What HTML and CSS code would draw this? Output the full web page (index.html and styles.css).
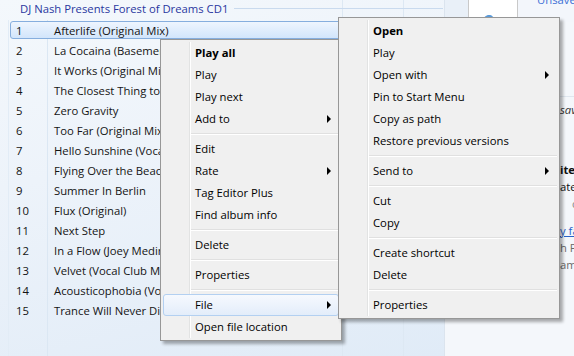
FILE: index.html
```html
<!DOCTYPE html>
<html>
<head>
<meta charset="utf-8">
<title>Media Player</title>
<link rel="stylesheet" href="styles.css">
</head>
<body>
<div class="app">
  <section class="list">
    <div class="album">
      <span class="album-title">DJ Nash Presents Forest of Dreams CD1</span>
      <span class="album-rule"></span>
    </div>
    <div class="row selected"><span class="num">1</span><span class="title">Afterlife (Original Mix)</span></div>
    <div class="row"><span class="num">2</span><span class="title">La Cocaina (Basement Mix)</span></div>
    <div class="row"><span class="num">3</span><span class="title">It Works (Original Mix)</span></div>
    <div class="row"><span class="num">4</span><span class="title">The Closest Thing to Heaven</span></div>
    <div class="row"><span class="num">5</span><span class="title">Zero Gravity</span></div>
    <div class="row"><span class="num">6</span><span class="title">Too Far (Original Mix)</span></div>
    <div class="row"><span class="num">7</span><span class="title">Hello Sunshine (Vocal Mix)</span></div>
    <div class="row"><span class="num">8</span><span class="title">Flying Over the Beach</span></div>
    <div class="row"><span class="num">9</span><span class="title">Summer In Berlin</span></div>
    <div class="row"><span class="num">10</span><span class="title">Flux (Original)</span></div>
    <div class="row"><span class="num">11</span><span class="title">Next Step</span></div>
    <div class="row"><span class="num">12</span><span class="title">In a Flow (Joey Medina Remix)</span></div>
    <div class="row"><span class="num">13</span><span class="title">Velvet (Vocal Club Mix)</span></div>
    <div class="row"><span class="num">14</span><span class="title">Acousticophobia (Vocal Mix)</span></div>
    <div class="row"><span class="num">15</span><span class="title">Trance Will Never Die</span></div>
  </section>
  <aside class="panel">
    <div class="panel-top">
      <div class="thumb">
        <svg class="thumb-icon" width="14" height="8" viewBox="0 0 14 8"><path d="M2 8 C2 3 5 1 8 1 C11 1 13 3 13 6 L13 8 Z" fill="#5b9ad8"/></svg>
      </div>
      <span class="unsaved">Unsaved list</span>
    </div>
    <div class="info">
      <div class="info-line info-italic">save</div>
      <div class="info-rule"></div>
      <div class="info-line info-bold">items</div>
      <div class="info-line">ate</div>
      <div class="info-line info-grey info-c">c</div>
      <div class="info-line info-link">y fa</div>
      <div class="info-line info-grey">h P</div>
      <div class="info-line info-grey">am</div>
    </div>
  </aside>
</div>

<div class="menu menu-track">
  <div class="item bold">Play all</div>
  <div class="item">Play</div>
  <div class="item">Play next</div>
  <div class="item sub">Add to</div>
  <div class="sep"></div>
  <div class="item">Edit</div>
  <div class="item sub">Rate</div>
  <div class="item">Tag Editor Plus</div>
  <div class="item">Find album info</div>
  <div class="sep"></div>
  <div class="item">Delete</div>
  <div class="sep"></div>
  <div class="item">Properties</div>
  <div class="sep"></div>
  <div class="item sub hot">File</div>
  <div class="item">Open file location</div>
</div>

<div class="menu menu-file">
  <div class="item bold">Open</div>
  <div class="item">Play</div>
  <div class="item sub">Open with</div>
  <div class="item">Pin to Start Menu</div>
  <div class="item">Copy as path</div>
  <div class="item">Restore previous versions</div>
  <div class="sep"></div>
  <div class="item sub">Send to</div>
  <div class="sep"></div>
  <div class="item">Cut</div>
  <div class="item">Copy</div>
  <div class="sep"></div>
  <div class="item">Create shortcut</div>
  <div class="item">Delete</div>
  <div class="sep"></div>
  <div class="item">Properties</div>
</div>
</body>
</html>
```

FILE: styles.css
```css
* { box-sizing: border-box; }

html, body {
  margin: 0;
  width: 574px;
  height: 356px;
  overflow: hidden;
}

body {
  position: relative;
  font-family: "Open Sans", "Noto Sans", sans-serif;
  font-size: 11.3px;
  color: #101010;
  background: #f4f7fb;
}

.app {
  display: grid;
  grid-template-columns: 445px 129px;
  height: 356px;
}

/* ---------- playlist ---------- */
.list {
  height: 356px;
  overflow: hidden;
  display: flex;
  flex-direction: column;
  border-right: 1px solid #dbe4ee;
  background:
    linear-gradient(#e2ecf6, #e2ecf6) 8px 20px / 1px 100% no-repeat,
    linear-gradient(#dbe7f3, #dbe7f3) 47px 20px / 1px 100% no-repeat,
    linear-gradient(#dde8f3, #dde8f3) 342px 0 / 1px 100% no-repeat,
    linear-gradient(#dde8f3, #dde8f3) 403px 0 / 1px 100% no-repeat,
    linear-gradient(165deg, #f4f8fc 0%, #edf3fa 40%, #e0ebf7 100%);
}

.album {
  height: 20px;
  flex: none;
  display: flex;
  align-items: center;
  padding-left: 20px;
  gap: 6px;
  padding-bottom: 3px;
}

.album-title {
  color: #2a37a0;
  white-space: nowrap;
}

.album-rule {
  flex: 1;
  height: 1px;
  background: #c9daee;
  margin-right: 1px;
}

.row {
  flex: none;
  height: 18px;
  margin: 1px 2px 1px 10px;
  border: 1px solid transparent;
  border-radius: 3px;
  display: flex;
  align-items: center;
  white-space: nowrap;
  color: #141414;
}

.row.selected {
  border-color: #86aede;
  background: linear-gradient(#eef5fe, #d2e5fb);
}

.num {
  width: 43px;
  padding-left: 5px;
}

/* ---------- right panel ---------- */
.panel {
  background: #f4f7fb;
  position: relative;
  overflow: hidden;
}

.panel-top {
  height: 22px;
  display: flex;
  align-items: flex-start;
  background: linear-gradient(90deg, #e9f0f8 0, #e9f0f8 23px, #f3f6fb 23px);
}

.thumb {
  flex: none;
  margin-left: 23px;
  width: 50px;
  height: 22px;
  background: #fff;
  border-left: 1px solid #c9c9c9;
  border-right: 1px solid #c9c9c9;
  display: flex;
  align-items: flex-end;
  padding-left: 12px;
}

.unsaved {
  flex: none;
  margin-left: 19px;
  margin-top: -8px;
  color: #3a6fd6;
  white-space: nowrap;
}

.info {
  padding-left: 115px;
  padding-top: 79px;
  white-space: nowrap;
}

.info-line {
  height: 17px;
  line-height: 17px;
}

.info-italic {
  font-style: italic;
  color: #333;
}

.info-rule {
  height: 1px;
  background: #dfe6ee;
  margin: -22px 0 0 -10px;
  width: 40px;
  position: relative;
}

.info-rule + .info-bold {
  margin-top: 64px;
}

.info-bold { font-weight: 700; }

.info-grey { color: #6b6b6b; }

.info-c {
  padding-left: 12px;
  margin-bottom: 10px;
  color: #8a8a8a;
}

.info-link {
  color: #2a63c8;
  text-decoration: underline;
}

/* ---------- context menus ---------- */
.menu {
  position: absolute;
  background: #f0f0f0;
  border: 1px solid #979797;
  padding: 2px;
  box-shadow: 3px 3px 3px rgba(0, 0, 0, 0.32);
  color: #000;
  font-size: 11.3px;
}

.menu::before {
  content: "";
  position: absolute;
  left: 28px;
  top: 2px;
  bottom: 2px;
  width: 1px;
  background: #e2e3e3;
  border-right: 1px solid #fff;
  box-sizing: content-box;
}

.menu-track {
  left: 160px;
  top: 39px;
  width: 182px;
}

.menu-file {
  left: 338px;
  top: 17px;
  width: 222px;
}

.item {
  position: relative;
  height: 22px;
  line-height: 20px;
  padding-left: 31px;
  white-space: nowrap;
  border: 1px solid transparent;
  border-radius: 3px;
}

.item.bold { font-weight: 700; }

.item.sub::after {
  content: "";
  position: absolute;
  right: 7px;
  top: 6px;
  border-left: 4px solid #000;
  border-top: 4px solid transparent;
  border-bottom: 4px solid transparent;
}

.item.hot {
  border-color: #b3d0f1;
  background: linear-gradient(#f6f9fe, #e3edfa);
}

.sep {
  height: 2px;
  margin: 3px 0 3px 27px;
  border-top: 1px solid #e0e0e0;
  border-bottom: 1px solid #fff;
}
```
